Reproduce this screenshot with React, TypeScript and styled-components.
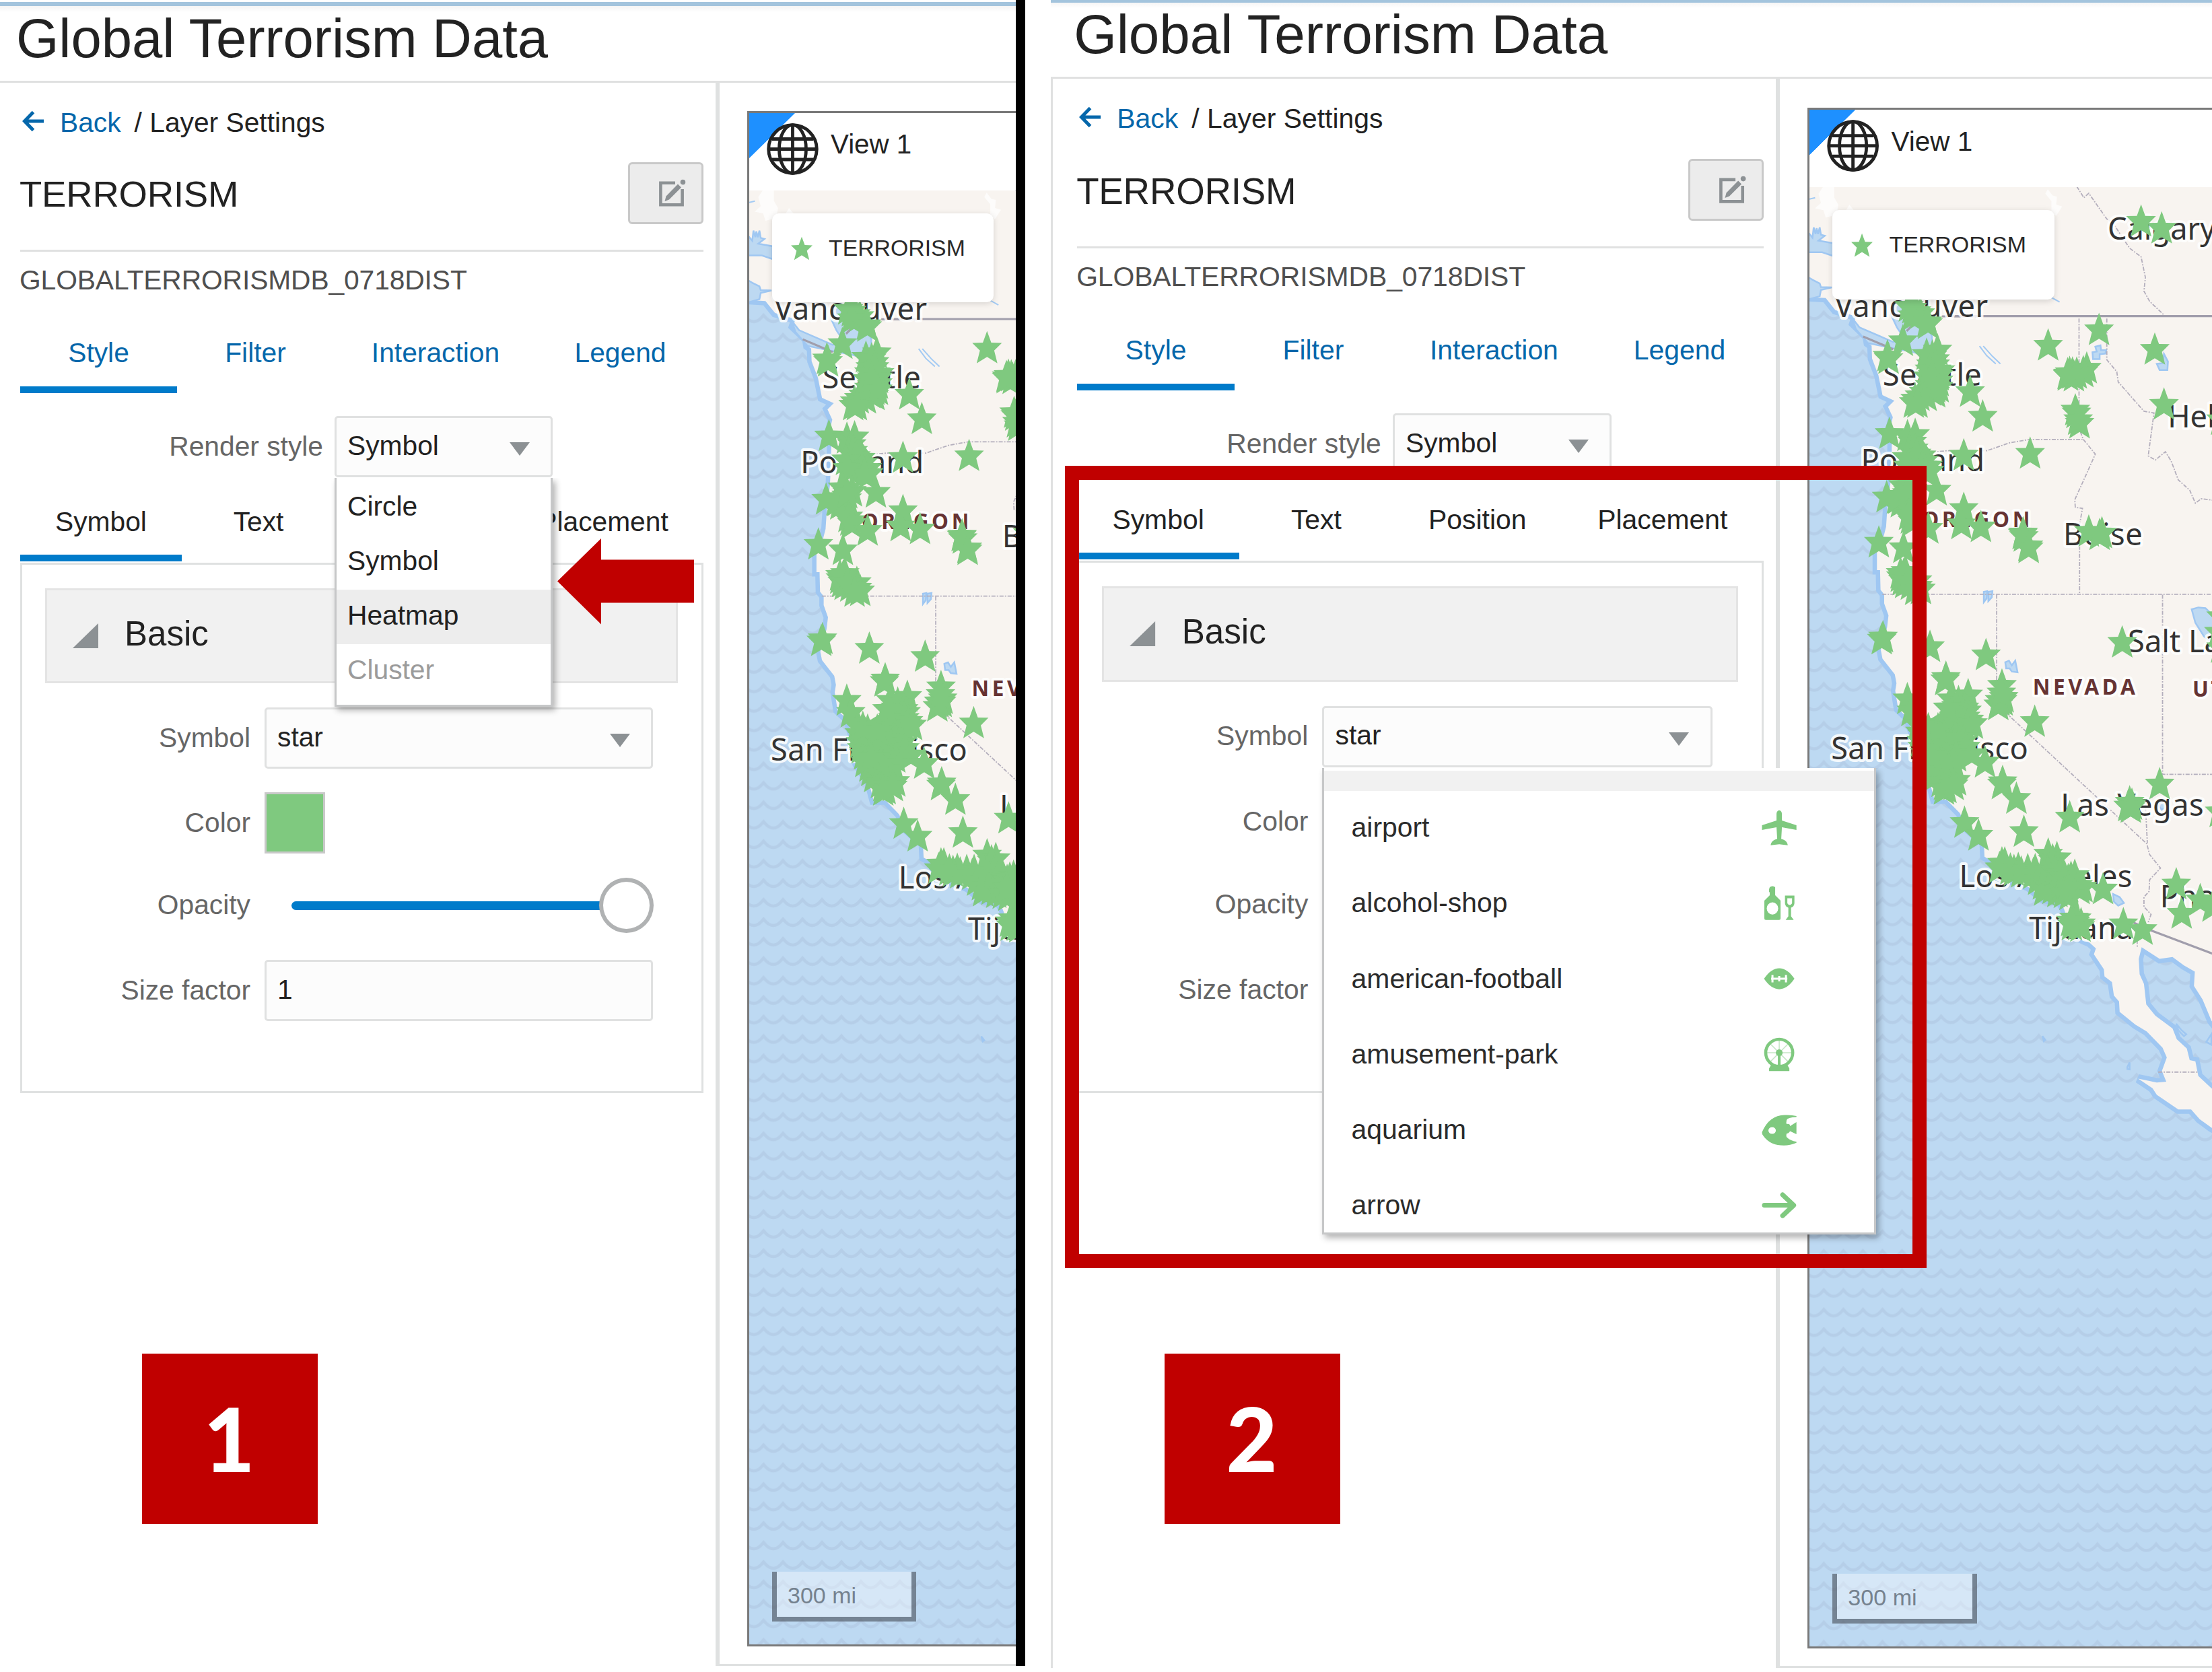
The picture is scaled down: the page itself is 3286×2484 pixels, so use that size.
import React from "react";
import styled, { createGlobalStyle, css } from "styled-components";

const GlobalStyle = createGlobalStyle`
  * { box-sizing: border-box; }
  body { margin: 0; background: #fff; }
`;

const GREEN = "#7fc97f";
const RED = "#c00000";
const LINE = "#e0e1e1";

/* ---------- canvas ---------- */

const Canvas = styled.main`
  position: relative;
  display: flex;
  align-items: flex-start;
  width: 3286px;
  height: 2484px;
  overflow: hidden;
  background: #fff;
  color: #222;
  font-family: "Liberation Sans", Arial, sans-serif;
  font-size: 40.75px;
`;

const Separator = styled.div`
  flex: none;
  width: 14px;
  height: 2475px;
  margin-right: 38px;
  background: #000;
`;

const ShotClip = styled.section<{ $width: number; $height: number }>`
  flex: none;
  width: ${(p) => p.$width}px;
  height: ${(p) => p.$height}px;
  overflow: hidden;
`;

const Shot = styled.div<{ $scale: number; $lift: number; $gutter: number }>`
  display: flex;
  flex-direction: column;
  width: ${(p) => 1720 + p.$gutter}px;
  height: 2475px;
  margin-top: ${(p) => -p.$lift}px;
  zoom: ${(p) => p.$scale};
  background: #fff;
`;

const Header = styled.header<{ $gutter: number }>`
  flex: none;
  height: 120px;
  padding: 3px 0 0 ${(p) => p.$gutter + 24}px;
  background: linear-gradient(
    #fff 0 3px,
    #a3c4dd 3px 9.5px,
    #f5f5f5 9.5px,
    #ffffff 18px
  );
`;

const AppTitle = styled.h1`
  margin: 0;
  font-size: 81.5px;
  font-weight: 400;
  line-height: 107px;
  letter-spacing: -0.05px;
`;

const Body = styled.div`
  flex: 1;
  display: flex;
  min-height: 0;
  border-top: 3px solid ${LINE};
`;

/* ---------- sidebar ---------- */

const Sidebar = styled.aside<{ $gutter: number }>`
  flex: none;
  width: ${(p) => 1063 + p.$gutter}px;
  padding: 0 18px 0 ${(p) => 30 + p.$gutter - (p.$gutter ? 4 : 0)}px;
  border-left: ${(p) => (p.$gutter ? `3px solid ${LINE}` : "none")};
`;

const Breadcrumb = styled.nav`
  display: flex;
  align-items: center;
  height: 118px;
  white-space: pre;
  svg { flex: none; margin: -5px 0 0 3px; }
`;

const BackLink = styled.a`
  margin: 0 20px 0 23px;
  color: #0567ab;
`;

const LayerHead = styled.div`
  display: flex;
  justify-content: space-between;
  align-items: flex-start;
  height: 133px;
  border-bottom: 3px solid ${LINE};
`;

const LayerName = styled.h2`
  margin: 0 0 0 -1px;
  font-size: 54.5px;
  font-weight: 400;
  line-height: 96px;
  letter-spacing: -0.2px;
`;

const EditButton = styled.button`
  display: flex;
  align-items: center;
  justify-content: flex-end;
  width: 112px;
  height: 92px;
  padding: 0 23px 0 0;
  border: 3px solid #c9c9c9;
  border-radius: 6px;
  background: #ececec;
`;

const TableName = styled.div`
  height: 84px;
  margin-left: -1px;
  line-height: 84px;
  color: #4f4f4f;
  letter-spacing: -0.1px;
`;

const TabBar = styled.div<{ $columns: string }>`
  display: grid;
  grid-template-columns: ${(p) => p.$columns};
`;

const Tab = styled.div<{ $active?: boolean; $link?: boolean }>`
  height: ${(p) => (p.$link ? 126 : 125)}px;
  padding-top: 16px;
  line-height: 101px;
  text-align: center;
  color: ${(p) => (p.$link ? "#0567ab" : "#222")};
  border-bottom: 10px solid ${(p) => (p.$active ? "#007bca" : "transparent")};
`;

const FieldRow = styled.div<{ $label: number; $gap: number; $top: number; $height?: number }>`
  display: flex;
  align-items: center;
  height: ${(p) => p.$height ?? 91}px;
  margin-top: ${(p) => p.$top}px;
  gap: ${(p) => p.$gap}px;
  > label {
    flex: none;
    width: ${(p) => p.$label}px;
    padding-bottom: 1px;
    text-align: right;
    color: #666;
  }
`;

const Control = styled.div<{ $width: number }>`
  position: relative;
  flex: none;
  display: flex;
  align-items: center;
  justify-content: space-between;
  width: ${(p) => p.$width}px;
  height: 91px;
  padding: 0 31px 0 16px;
  border: 3px solid #e0e1e1;
  border-radius: 5px;
  background: #fcfcfc;
  > span { padding-bottom: 3px; }
`;

const Caret = styled.i`
  margin-top: 7px;
  border: solid transparent;
  border-width: 20px 15px 0;
  border-top-color: #8c9194;
`;

const Menu = styled.ul<{ $width: number; $height: number }>`
  position: absolute;
  z-index: 5;
  left: -3px;
  top: 89px;
  width: ${(p) => p.$width}px;
  height: ${(p) => p.$height}px;
  margin: 0;
  padding: 4px 0 0;
  overflow: hidden;
  list-style: none;
  border: 3px solid #c6c7c8;
  border-top: 0;
  background: #fff;
  box-shadow: 4px 5px 9px rgba(0, 0, 0, 0.3);
  clip-path: inset(0 -24px -24px -24px);
`;

const MenuItem = styled.li<{ $tone?: "hover" | "disabled" }>`
  height: 81px;
  padding-left: 16px;
  line-height: 76px;
  color: ${(p) => (p.$tone === "disabled" ? "#9b9b9b" : "#222")};
  background: ${(p) => (p.$tone === "hover" ? "#ededed" : "#fff")};
`;

const SearchStrip = styled.li`
  height: 30px;
  background: #f1f1f1;
`;

const SymbolItem = styled.li`
  display: flex;
  align-items: center;
  justify-content: space-between;
  height: 111.8px;
  padding: 0 115px 3px 40px;
  color: #2b2b2b;
  svg { flex: none; }
`;

const SettingsBox = styled.div`
  height: 788px;
  margin-top: 2px;
  padding: 35px 35px 0 34px;
  border: 3px solid #dfe1e1;
`;

const GroupHead = styled.div`
  display: flex;
  align-items: center;
  gap: 39px;
  height: 141px;
  padding: 0 0 7px 38px;
  border: 3px solid #e4e4e4;
  background: #f1f1f1;
  font-size: 51px;
  svg { flex: none; margin-top: 6px; }
`;

const Swatch = styled.div`
  width: 90px;
  height: 91px;
  border: 3px solid #c9c9c9;
  background: ${GREEN};
`;

const Slider = styled.div`
  display: flex;
  align-items: center;
  width: 578px;
  padding-left: 40px;
`;

const Track = styled.div`
  flex: 1;
  height: 13px;
  margin-right: -8px;
  border-radius: 7px;
  background: #007bca;
`;

const Thumb = styled.div`
  flex: none;
  position: relative;
  width: 81px;
  height: 82px;
  border: 6px solid #b0b2b3;
  border-radius: 50%;
  background: #fff;
`;

/* ---------- map view ---------- */

const Divider = styled.div`
  flex: none;
  width: 6px;
  background: #dfe1e1;
`;

const Stage = styled.div`
  flex: 1;
  padding: 42px 0 26px 41px;
  overflow: hidden;
  border-bottom: 3px solid #dfe1e1;
`;

const ViewFrame = styled.div`
  width: 640px;
  height: 2281px;
  border: 3px solid #797979;
  overflow: hidden;
`;

const ViewHead = styled.div`
  display: flex;
  align-items: flex-start;
  gap: 18px;
  height: 115px;
  padding: 15px 0 0 26px;
  background: linear-gradient(to bottom right, #1e90ff 49.7%, transparent 50.3%) 0 0 / 68px 67px no-repeat;
  font-size: 40.3px;
  line-height: 64px;
`;

const MapArea = styled.div`
  position: relative;
  > svg { display: block; }
`;

const LegendCard = styled.div`
  position: absolute;
  left: 34px;
  top: 34px;
  display: flex;
  align-items: center;
  gap: 24px;
  width: 329px;
  height: 132px;
  padding: 0 0 29px 28px;
  border-radius: 10px;
  background: #fff;
  box-shadow: 0 2px 10px rgba(0, 0, 0, 0.14);
  font-size: 33.8px;
  color: #2a2a2a;
`;

const ScaleBar = styled.div`
  position: absolute;
  left: 34px;
  top: 2052px;
  width: 214px;
  height: 74px;
  padding-left: 16px;
  border: 7px solid rgba(80, 88, 98, 0.66);
  border-top: 0;
  background: rgba(255, 255, 255, 0.38);
  background-clip: padding-box;
  color: #75828f;
  font-size: 34px;
  line-height: 70px;
`;

/* ---------- annotations ---------- */

const StepBadge = styled.div<{ $left: number }>`
  position: absolute;
  left: ${(p) => p.$left}px;
  top: 2011px;
  display: flex;
  align-items: center;
  justify-content: center;
  width: 261px;
  height: 253px;
  padding: 0 2px 2px 0;
  background: ${RED};
  color: #fff;
  font: 900 131px Lato, sans-serif;
`;

const HighlightFrame = styled.div`
  position: absolute;
  left: 1582px;
  top: 692px;
  z-index: 6;
  width: 1280px;
  height: 1192px;
  border: 21px solid ${RED};
`;

const Pointer = styled.svg`
  position: absolute;
  z-index: 6;
  left: 828px;
  top: 800px;
`;

/* ---------- map data ---------- */

// The basemap is digitised on four tiles; each has its own origin and scale.
type Tile = { ox: number; oy: number; sx: number; sy: number };
const NW: Tile = { ox: 1080, oy: 0, sx: 2.8, sy: 1.8447 };
const SW: Tile = { ox: 1080, oy: 850, sx: 2.8, sy: 2.24 };
const NE: Tile = { ox: 1045.2, oy: 106.6, sx: 2.3629, sy: 1.968 };
const SE: Tile = { ox: 1045.2, oy: 853.6, sx: 2.3629, sy: 1.749 };

type Pt = [number, number];
const on = (t: Tile, ...v: number[]): Pt[] => {
  const out: Pt[] = [];
  for (let i = 0; i < v.length; i += 2) out.push([t.ox + v[i] / t.sx, t.oy + v[i + 1] / t.sy]);
  return out;
};
const line = (pts: Pt[]) => "M" + pts.map(([x, y]) => `${x.toFixed(1)} ${y.toFixed(1)}`).join("L");
const area = (pts: Pt[]) => line(pts) + "Z";

const LAND = area([
  ...on(NW, 80, 500, 80, 822, 160, 825, 200, 858, 285, 875, 275, 895, 330, 930, 335, 948, 350, 955, 352, 990, 378, 1035, 395, 1090, 444, 1105,
    418, 1122, 438, 1150, 425, 1185, 434, 1215, 432, 1270, 428, 1330, 415, 1400, 410, 1450, 400, 1475, 372, 1520, 372, 1568),
  ...on(SW, 385, 0, 387, 65, 402, 80, 402, 110, 420, 150, 414, 190, 388, 265, 395, 293, 446, 345, 453, 375, 448, 400, 460, 460, 500, 490,
    520, 540, 540, 640, 590, 700, 610, 760, 660, 760, 715, 805, 750, 860, 815, 905, 818, 950, 850, 965, 870, 1010, 930, 1030, 1000, 1050, 1060, 1090, 1130, 1100),
  ...on(SE, 1050, 870, 1085, 940, 1140, 958, 1162, 973, 1155, 988, 1190, 1027, 1192, 1045, 1218, 1060, 1225, 1095, 1243, 1110, 1245, 1137,
    1300, 1170, 1340, 1188, 1395, 1230, 1410, 1255, 1393, 1290, 1408, 1318, 1375, 1320, 1310, 1310, 1360, 1335, 1375, 1352, 1450, 1390, 1495, 1390,
    1525, 1415, 1566, 1437, 1600, 1450, 1600, 1350, 1566, 1335, 1520, 1303, 1510, 1265, 1490, 1262, 1480, 1232, 1445, 1208, 1430, 1180,
    1370, 1147, 1338, 1118, 1330, 1065, 1315, 1040, 1312, 1000, 1322, 970, 1385, 1000, 1430, 995, 1470, 1017, 1508, 1033, 1505, 1070, 1535, 1105, 1566, 1160, 1640, 1230),
  ...on(NE, 1640, 300),
]);

const WATERS = [
  area(on(NW, 80, 640, 105, 660, 110, 632, 118, 650, 122, 634, 128, 650, 135, 632, 140, 652, 156, 655, 130, 668, 190, 675, 190, 710, 145, 700, 80, 700)),
  area(on(NW, 80, 765, 105, 775, 135, 785, 140, 795, 185, 796, 140, 803, 135, 820, 80, 830)),
  area(on(NW, 270, 880, 300, 905, 440, 945, 480, 930, 455, 905, 430, 870, 445, 830, 560, 860, 600, 930, 600, 1000, 560, 980, 520, 972, 440, 962, 335, 948, 285, 910)),
  area(on(NE, 770, 1526, 782, 1524, 780, 1545, 770, 1556)),
  area(on(NE, 786, 1526, 800, 1524, 798, 1542, 786, 1553)),
  area(on(SE, 845, 232, 858, 228, 868, 240, 880, 228, 888, 258, 868, 256, 860, 248, 848, 248)),
  area(on(NE, 1160, 812, 1178, 808, 1180, 822, 1198, 822, 1195, 832, 1175, 834, 1175, 848, 1152, 848, 1150, 828, 1165, 826)),
  area(on(NE, 1375, 862, 1395, 860, 1400, 833, 1414, 855, 1412, 880, 1385, 880)),
  area(on(SE, 1497, 95, 1520, 90, 1545, 92, 1600, 130, 1600, 200, 1540, 165, 1510, 130)),
  area(on(SE, 1222, 832, 1245, 840, 1260, 855, 1240, 862, 1225, 852)),
  area(on(SE, 1388, 592, 1398, 598, 1402, 608, 1392, 614, 1382, 604)),
  area(on(SE, 1443, 1168, 1462, 1185, 1478, 1195, 1470, 1200, 1450, 1185)),
  area(on(SE, 975, 1200, 985, 1210, 980, 1213)),
  area(on(SE, 1272, 1280, 1280, 1268, 1280, 1286, 1272, 1285)),
  area(on(SE, 1548, 1215, 1566, 1195, 1566, 1222)),
];

const STREAMS = [
  line(on(NE, 755, 810, 780, 838, 812, 862)),
  line(on(NE, 768, 810, 800, 840, 828, 862)),
  line(on(NE, 1005, 668, 1035, 682)),
  line(on(NE, 160, 382, 180, 378)),
];

const SNOW = [
  area(on(NW, 150, 520, 195, 520, 195, 550, 212, 570, 205, 600, 190, 600, 160, 605, 150, 585, 115, 580, 140, 565, 130, 540)),
  area(on(NW, 240, 590, 258, 570, 280, 588)),
  area(on(NW, 1080, 528, 1100, 545, 1118, 548, 1115, 570, 1140, 575, 1115, 600, 1095, 595, 1095, 560, 1070, 540)),
];

const STATE_LINES = [
  on(NE, 560, 1122, 640, 1115, 780, 1115, 860, 1092, 930, 1082, 1115, 1082),
  on(NE, 1103, 730, 1103, 1050, 1118, 1082, 1160, 1125, 1125, 1190, 1088, 1258, 1090, 1280, 1115, 1283, 1105, 1330, 1105, 1533),
  on(NE, 1200, 730, 1200, 850, 1235, 885, 1240, 915, 1330, 1000, 1365, 1005, 1345, 1130, 1370, 1142, 1405, 1118, 1425, 1145, 1450, 1200, 1490, 1230, 1510, 1268, 1530, 1255, 1600, 1262),
  on(NE, 1095, 345, 1120, 378, 1137, 365, 1200, 440, 1220, 450, 1280, 525, 1320, 550, 1335, 610, 1330, 650, 1350, 680, 1398, 718),
  on(NE, 415, 1533, 1640, 1533),
  on(SE, 815, 57, 815, 340, 855, 368, 1340, 702, 1350, 730, 1388, 765, 1350, 795, 1348, 825, 1330, 840, 1330, 865, 1355, 885, 1345, 905),
  on(SE, 1395, 57, 1395, 522, 1640, 522),
  on(SE, 1385, 560, 1335, 600, 1342, 700),
  on(SE, 1305, 930, 1307, 970),
  on(SE, 1380, 1293, 1520, 1293),
].map(line);

const COUNTRY_LINES = [
  on(NW, 640, 875, 800, 875),
  on(NE, 640, 723, 1640, 723),
  on(NW, 315, 930, 440, 965),
  on(NW, 495, 915, 525, 895),
  on(SE, 1290, 905, 1350, 925, 1640, 1006),
].map(line);

const STARS: Pt[] = [
  // Puget Sound and Vancouver
  ...on(NE, 520, 650, 535, 660, 548, 666, 508, 645, 520, 672, 575, 695, 573, 690, 487, 745, 433, 790, 437, 797, 570, 785, 608, 772, 600, 800, 585, 815,
    605, 830, 612, 845, 600, 855, 590, 868, 600, 880, 580, 875, 612, 862, 618, 832, 575, 850, 585, 890, 600, 895, 530, 915, 545, 905, 525, 925, 560, 895, 570, 905,
    590, 790, 580, 830, 600, 815, 590, 845, 612, 880, 538, 925),
  ...on(NE, 722, 893, 766, 965, 440, 1015, 503, 1022, 530, 1018, 520, 1040, 510, 1060, 552, 1080, 540, 1090, 530, 1100, 560, 1095, 575, 1110,
    520, 1110, 580, 1125, 545, 1112, 515, 1090, 700, 1078, 932, 1073, 430, 1200, 470, 1205, 490, 1195, 480, 1215, 500, 1190, 605, 1180,
    525, 1060, 535, 1075, 555, 1110, 500, 1085, 565, 1125, 505, 1110),
  ...on(NW, 500, 1320, 485, 1330, 520, 1300, 470, 1320, 480, 1290, 455, 1325, 500, 1305, 513, 1380, 505, 1370, 520, 1388, 585, 1407, 732, 1353, 722, 1395, 803, 1403, 978, 1420, 1000, 1455,
    380, 1445, 482, 1460, 470, 1530, 480, 1545, 490, 1525, 540, 1550),
  ...on(NE, 995, 758, 1173, 713, 1368, 770, 1070, 838, 1064, 846, 1080, 840, 1085, 848, 1130, 825, 1118, 836, 1095, 840, 1063, 842, 1090, 947, 1094, 955, 1105, 985, 1100, 975, 1400, 930, 1320, 397,
    1392, 417, 1600, 975, 910, 1315, 906, 1308, 927, 1348, 1137, 1300, 1183, 1305, 1175, 1310),
  ...on(NE, 480, 1432, 487, 1442, 495, 1450, 540, 1460, 550, 1468, 515, 1455, 490, 1425, 505, 1445, 530, 1470),
  // northern California and the Bay Area
  ...on(SW, 397, 165, 392, 172, 592, 197, 824, 224, 658, 299, 655, 307, 498, 370, 515, 410, 750, 357, 680, 370, 710, 380, 700, 395, 890, 325, 897, 365, 893, 375, 875, 390,
    1026, 445, 585, 470, 575, 480, 560, 490, 555, 510, 560, 530, 570, 550, 580, 570, 592, 590, 600, 605, 612, 625, 640, 645, 650, 655, 660, 665, 700, 640,
    650, 480, 670, 460, 690, 430, 720, 440, 735, 400, 745, 410, 740, 430, 755, 440, 750, 450, 770, 452, 700, 500, 680, 520, 720, 500, 730, 510, 740, 530,
    660, 540, 640, 500, 620, 560, 600, 520, 765, 552, 820, 580, 700, 560, 690, 580, 670, 600, 640, 580, 893, 645, 890, 652, 950, 700, 735, 780, 793, 822, 981, 810, 1171, 762,
    545, 455, 550, 480, 565, 460, 625, 470, 665, 400, 880, 375, 888, 350, 575, 575, 600, 560, 650, 670, 690, 655),
  // southern California
  ...on(SW, 890, 915, 902, 915, 880, 930, 958, 933, 940, 940, 925, 935, 997, 937, 1028, 937, 970, 945, 1082, 885, 1118, 897, 1100, 905, 1020, 950, 1040, 970,
    1060, 985, 1080, 990, 1100, 1000, 1120, 1010, 1130, 985, 1065, 1005, 1080, 940, 1110, 940, 1130, 950, 1150, 960, 1165, 970),
  ...on(SE, 1088, 740, 1075, 745, 1100, 765, 1105, 775, 1115, 770, 1187, 775, 1085, 850, 1090, 860, 1100, 868, 1110, 865, 1078, 868, 1108, 872, 1258, 865, 1325, 880,
    1254, 136, 1385, 503, 1280, 550, 1288, 556, 1275, 560, 1443, 762, 1462, 838, 1527, 803, 1570, 820, 1595, 575, 1600, 70, 1592, 110, 1600, 150,
    1070, 790, 1050, 785, 1065, 770, 1095, 852, 1075, 858, 1284, 564),
];

const CORES = [
  area(on(SW, 560, 500, 600, 490, 660, 460, 700, 405, 740, 400, 780, 460, 785, 520, 755, 585, 700, 625, 685, 660, 690, 740, 640, 745, 600, 700, 555, 650, 525, 580)),
  area(on(SE, 840, 760, 930, 765, 990, 750, 1060, 760, 1110, 790, 1100, 825, 1060, 850, 1010, 850, 950, 815, 870, 785)),
  area(on(NE, 575, 830, 625, 830, 635, 900, 605, 970, 560, 975)),
  area(on(NE, 505, 1070, 545, 1070, 595, 1130, 585, 1175, 500, 1165)),
];

const STAR_PATH = "M0 0L6.2 17.2L22 17.6L10.6 29L15.4 48L0 38.4L-15.4 48L-10.6 29L-22 17.6L-6.2 17.2Z";

type PlaceLabel = { text: string; at: Pt; end?: number; state?: boolean };
const place = (t: Tile, text: string, x0: number, base: number, x1?: number, state?: boolean): PlaceLabel => {
  const [at] = on(t, x0, base);
  return { text, at, end: x1 === undefined ? undefined : (x1 - x0) / t.sx, state };
};

const PLACES: PlaceLabel[] = [
  place(NW, "Vancouver", 197, 877, 832),
  place(NW, "Seattle", 396, 1065, 806),
  place(NW, "Portland", 306, 1297, 818),
  place(NE, "Calgary", 1203, 500),
  place(NE, "Boise", 1048, 1390, 1325),
  place(NE, "Helena", 1413, 1048),
  place(SE, "Salt Lake City", 1274, 207),
  place(SE, "San Francisco", 236, 483, 925),
  place(SE, "Las Vegas", 1039, 630, 1539),
  place(SE, "Los Angeles", 684, 815, 1289),
  place(SE, "Tijuana", 928, 948, 1293),
  place(SE, "Phoenix", 1386, 867),
  place(NW, "OREGON", 559, 1450, 1016, true),
  place(SE, "NEVADA", 941, 316, 1308, true),
  place(SE, "UTAH", 1500, 321, undefined, true),
];

const haloText = css`
  paint-order: stroke;
  stroke: rgba(255, 255, 255, 0.85);
  stroke-width: 8px;
  stroke-linejoin: round;
`;

const CityText = styled.text`
  ${haloText}
  fill: #333;
  font: 400 45px "Noto Sans", sans-serif;
`;

const StateText = styled.text`
  ${haloText}
  fill: #633;
  font: 700 31.5px "Noto Sans", sans-serif;
  letter-spacing: 3.6px;
`;

function Basemap({ id }: { id: string }) {
  return (
    <svg width={634} height={2160} viewBox="1113 283 634 2160">
      <defs>
        <pattern id={id} x={1134.3} y={869} width={28.93} height={28.94} patternUnits="userSpaceOnUse">
          <rect width={29} height={29} fill="#bdd9f2" />
          <path d="M-2 6.2L0 4.4C5 11 9 14 14.46 14S24 11 28.93 4.4L31 6.2" fill="none" stroke="#b5cee8" strokeWidth={4.4} />
        </pattern>
      </defs>
      <rect x={1113} y={283} width={634} height={2160} fill={`url(#${id})`} />
      <path d={LAND} fill="none" stroke="#9fc7f2" strokeWidth={13} />
      <path d={LAND} fill="#f8f4f0" />
      {SNOW.map((d) => <path key={d} d={d} fill="#fdfcfb" />)}
      {WATERS.map((d) => <path key={d} d={d} fill="#bdd9f2" stroke="#9fc7f2" strokeWidth={2.5} />)}
      {STREAMS.map((d) => <path key={d} d={d} fill="none" stroke="#a3caf3" strokeWidth={2} />)}
      {STATE_LINES.map((d) => <path key={d} d={d} fill="none" stroke="#b4afbd" strokeWidth={1.8} strokeDasharray="6 2 2 2" />)}
      {COUNTRY_LINES.map((d) => <path key={d} d={d} fill="none" stroke="#a19eac" strokeWidth={3.2} />)}
      {PLACES.map((p) =>
        p.state ? (
          <StateText key={p.text} x={p.at[0]} y={p.at[1]} textLength={p.end}>{p.text}</StateText>
        ) : (
          <CityText key={p.text} x={p.at[0]} y={p.at[1]} textLength={p.end}>{p.text}</CityText>
        ),
      )}
      <g fill={GREEN}>
        {CORES.map((d) => <path key={d} d={d} />)}
        {STARS.map(([x, y], i) => <path key={i} d={STAR_PATH} transform={`translate(${x.toFixed(1)} ${y.toFixed(1)})`} />)}
      </g>
    </svg>
  );
}

/* ---------- icons ---------- */

const BackArrow = () => (
  <svg width={33} height={32} viewBox="0 0 33 32" fill="none" stroke="#0567ab" strokeWidth={5}>
    <path d="M16.5 2.5L3.5 16L16.5 29.5M3.5 16H32" />
  </svg>
);

const EditIcon = () => (
  <svg width={40} height={42} viewBox="0 0 40 42">
    <path d="M24 5.8H2.4V38.2H34.6V15" fill="none" stroke="#8c9194" strokeWidth={4.6} />
    <path d="M28 7.5L33 12.5L15 30.5L8.5 33L10.5 25.5Z" fill="#8c9194" />
    <circle cx={35.5} cy={4.6} r={3.8} fill="#8c9194" />
  </svg>
);

const Globe = () => (
  <svg width={77} height={77} viewBox="0 0 77 77" fill="none" stroke="#222" strokeWidth={4.8}>
    <circle cx={38.5} cy={38.5} r={35.8} />
    <ellipse cx={38.5} cy={38.5} rx={20} ry={35.8} />
    <path d="M38.5 2V75M3 38.5H74M8 23.5H69M8 54H69" />
  </svg>
);

const Disclosure = () => (
  <svg width={38} height={37}><path d="M38 0V37H0Z" fill="#8c9194" /></svg>
);

const SYMBOLS: { name: string; art: React.ReactNode }[] = [
  {
    name: "airport",
    art: <path d="M26 0C28.6 0 30 2.5 30 6V15L51.5 22V29L30 25L29 42C33.5 43 38 46 38.7 51.5L26 50L13.3 51.5C14 46 18.5 43 23 42L22 25L0.5 29V22L22 15V6C22 2.5 23.4 0 26 0Z" />,
  },
  {
    name: "alcohol-shop",
    art: (
      <>
        <path fillRule="evenodd" d="M12 2Q16 -1 20 2V10L20 14L28 22V48Q28 50.5 25.5 50.5H6.5Q4 50.5 4 48V22L12 14V10L11 9V5ZM16 24.5A8.5 9 0 1 0 16 42.5A8.5 9 0 1 0 16 24.5Z" />
        <path fillRule="evenodd" d="M34.5 14.5H48.5V26Q48 31 43.5 32.5V45L47.5 50.5H35.5L39.5 45V32.5Q35 31 34.5 26ZM38 18.5V26Q41.5 31 45 26V18.5Z" />
      </>
    ),
  },
  {
    name: "american-football",
    art: (
      <>
        <path d="M3.5 26Q14 10.500 26 10.500T48.5 26Q38 41.5 26 41.5T3.5 26Z" />
        <path d="M14 26H38M16 20.5V31.5M26 22V30M36 20.5V31.5" stroke="#fff" strokeWidth={3} />
      </>
    ),
  },
  {
    name: "amusement-park",
    art: (
      <>
        <circle cx={26} cy={24} r={20} fill="none" stroke={GREEN} strokeWidth={4.6} />
        <path d="M26 6V42M8 24H44M13 11L39 37M39 11L13 37" stroke={GREEN} strokeWidth={1.5} opacity={0.45} />
        <circle cx={26} cy={24} r={5} />
        <path d="M24 24H28V42H38L41 47V51H11V47L14 42H24Z" />
      </>
    ),
  },
  {
    name: "aquarium",
    art: (
      <path fillRule="evenodd" d="M0.5 29Q11 4 34 3.5Q44 3 51.5 5V6.5Q38 7 37 11Q36 15 37 17Q42 16 42 20L51.5 14V32L42 27.5Q40 31 37 31Q35.5 36 38 37Q42 41 51.5 43V44.5Q42 48.5 33 48.5Q13 48.5 3 35Q0 32 0.5 29ZM15.5 21.5A5.5 5 0 1 0 15.5 31.5A5.5 5 0 1 0 15.5 21.5Z" />
    ),
  },
  {
    name: "arrow",
    art: <path d="M4 25.5H47M31 10L47.5 25.5L31 41" fill="none" stroke={GREEN} strokeWidth={7} strokeLinecap="round" strokeLinejoin="round" />,
  },
];

/* ---------- application window ---------- */

type ShotProps = {
  id: string;
  width: number;
  height: number;
  scale?: number;
  lift?: number;
  gutter?: number;
  open: "render" | "symbol";
};

function LayerEditor({ id, width, height, scale = 1, lift = 0, gutter = 0, open }: ShotProps) {
  return (
    <ShotClip $width={width} $height={height}>
      <Shot $scale={scale} $lift={lift} $gutter={gutter}>
        <Header $gutter={gutter}>
          <AppTitle>Global Terrorism Data</AppTitle>
        </Header>
        <Body>
          <Sidebar $gutter={gutter}>
            <Breadcrumb>
              <BackArrow />
              <BackLink>Back</BackLink>
              <span>/ Layer Settings</span>
            </Breadcrumb>
            <LayerHead>
              <LayerName>TERRORISM</LayerName>
              <EditButton><EditIcon /></EditButton>
            </LayerHead>
            <TableName>GLOBALTERRORISMDB_0718DIST</TableName>
            <TabBar $columns="233px 233px 302px 247px">
              <Tab $link $active>Style</Tab>
              <Tab $link>Filter</Tab>
              <Tab $link>Interaction</Tab>
              <Tab $link>Legend</Tab>
            </TabBar>
            <FieldRow $label={450} $gap={17} $top={34}>
              <label>Render style</label>
              <Control $width={324}>
                <span>Symbol</span>
                <Caret />
                {open === "render" && (
                  <Menu $width={324} $height={340}>
                    <MenuItem>Circle</MenuItem>
                    <MenuItem>Symbol</MenuItem>
                    <MenuItem $tone="hover">Heatmap</MenuItem>
                    <MenuItem $tone="disabled">Cluster</MenuItem>
                  </Menu>
                )}
              </Control>
            </FieldRow>
            <TabBar $columns="240px 228px 249px 299px">
              <Tab $active>Symbol</Tab>
              <Tab>Text</Tab>
              <Tab>Position</Tab>
              <Tab>Placement</Tab>
            </TabBar>
            <SettingsBox>
              <GroupHead><Disclosure />Basic</GroupHead>
              <FieldRow $label={305} $gap={21} $top={36}>
                <label>Symbol</label>
                <Control $width={577}>
                  <span>star</span>
                  <Caret />
                  {open === "symbol" && (
                    <Menu $width={820} $height={690}>
                      <SearchStrip />
                      {SYMBOLS.map((s) => (
                        <SymbolItem key={s.name}>
                          {s.name}
                          <svg width={52} height={52} viewBox="0 0 52 52" fill={GREEN}>{s.art}</svg>
                        </SymbolItem>
                      ))}
                    </Menu>
                  )}
                </Control>
              </FieldRow>
              <FieldRow $label={305} $gap={21} $top={35}>
                <label>Color</label>
                <Swatch />
              </FieldRow>
              <FieldRow $label={305} $gap={21} $top={35} $height={84}>
                <label>Opacity</label>
                <Slider><Track /><Thumb /></Slider>
              </FieldRow>
              <FieldRow $label={305} $gap={21} $top={39}>
                <label>Size factor</label>
                <Control $width={577}><span>1</span></Control>
              </FieldRow>
            </SettingsBox>
          </Sidebar>
          <Divider />
          <Stage>
            <ViewFrame>
              <ViewHead><Globe />View 1</ViewHead>
              <MapArea>
                <Basemap id={id} />
                <LegendCard>
                  <svg width={32} height={36} viewBox="-22 -1 44 50" fill={GREEN} preserveAspectRatio="none"><path d={STAR_PATH} /></svg>
                  TERRORISM
                </LegendCard>
                <ScaleBar>300 mi</ScaleBar>
              </MapArea>
            </ViewFrame>
          </Stage>
        </Body>
      </Shot>
    </ShotClip>
  );
}

export default function App() {
  return (
    <>
      <GlobalStyle />
      <Canvas>
        <LayerEditor id="waves-a" width={1509} height={2475} open="render" />
        <Separator />
        <LayerEditor id="waves-b" width={1725} height={2479} scale={1.0037} lift={6} gutter={10} open="symbol" />
        <Pointer width={203} height={128} viewBox="0 0 203 128">
          <path d="M0 63.5L65 0V31.5H203V95.5H65V127.5Z" fill={RED} />
        </Pointer>
        <HighlightFrame />
        <StepBadge $left={211}>1</StepBadge>
        <StepBadge $left={1730}>2</StepBadge>
      </Canvas>
    </>
  );
}
